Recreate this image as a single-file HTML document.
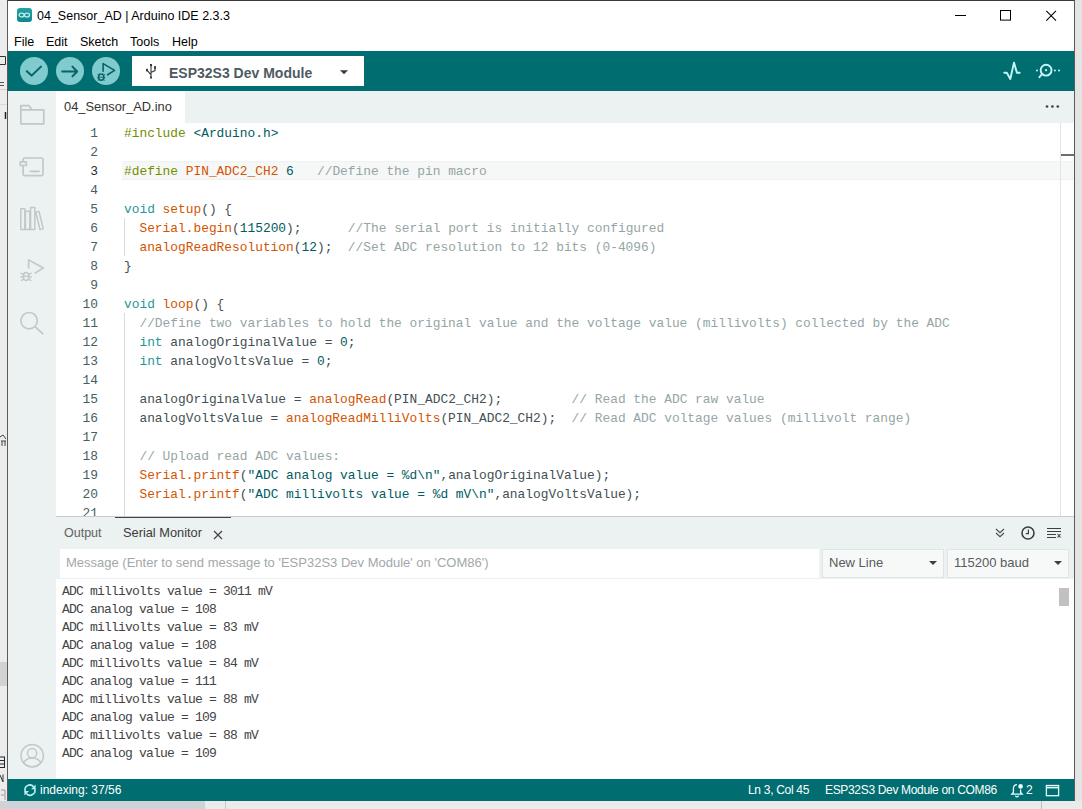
<!DOCTYPE html>
<html><head><meta charset="utf-8">
<style>
*{margin:0;padding:0;box-sizing:border-box}
html,body{width:1082px;height:809px;overflow:hidden;background:#f0f0f0;font-family:"Liberation Sans",sans-serif}
.a{position:absolute}
svg{position:absolute;overflow:visible}
#bgL{left:0;top:0;width:8px;height:809px;background:#ececec}
#bgR{left:1074px;top:0;width:8px;height:809px;background:#e4e4e4}
#bgB{left:0;top:801px;width:1082px;height:8px;background:#ebebeb}
#win{left:7px;top:0;width:1068px;height:801px;background:#fff;border:1px solid #5a5a5a;border-top:1px solid #3a3a3a}
#title{left:8px;top:1px;width:1066px;height:29px;background:#fff}
#ttext{left:37px;top:8px;font-size:12.5px;color:#000;white-space:pre}
#menu{left:8px;top:30px;width:1066px;height:21px;background:#fff;font-size:12.5px;color:#000}
#menu span{position:absolute;top:5px}
#tb{left:8px;top:51px;width:1066px;height:40px;background:#006d70}
.cb{position:absolute;width:28px;height:28px;border-radius:50%;background:#7fcbcd;top:6px}
#sel{left:124px;top:5px;width:232px;height:30px;background:#fff}
#seltext{left:37px;top:9px;font-size:14px;font-weight:bold;color:#4e5b61;white-space:pre}
#tabs{left:56px;top:91px;width:1018px;height:32px;background:#ecf1f1}
#tab{left:0;top:0;width:129px;height:32px;background:#fff}
#tabtext{left:8px;top:8px;font-size:12.85px;color:#333;white-space:pre}
#side{left:8px;top:91px;width:48px;height:688px;background:#ecf1f1}
#editor{left:56px;top:123px;width:1018px;height:393px;background:#fff;overflow:hidden}
.ln{position:absolute;left:0;width:42px;text-align:right;font-family:"Liberation Mono",monospace;font-size:12.86px;color:#44605f;height:19px;line-height:21px}
.cl{position:absolute;left:68px;font-family:"Liberation Mono",monospace;font-size:12.86px;color:#434f54;white-space:pre;height:19px;line-height:21px}
.k{color:#728e00}.t{color:#1f969a}.f{color:#d35400}.n{color:#005c5f}.c{color:#95a5a6}.s{color:#005c5f}
#panel{left:56px;top:516px;width:1018px;height:263px;background:#ecf1f1;border-top:1px solid #c8cccc}
#out{left:0;top:62px;width:1018px;height:201px;background:#fff}
.sl{position:absolute;left:6px;font-family:"Liberation Mono",monospace;font-size:13px;letter-spacing:-0.8px;color:#444;white-space:pre;height:18px;line-height:20px}
#status{left:8px;top:779px;width:1066px;height:22px;background:#006d70;color:#fff}
#status span{position:absolute;white-space:pre;top:4px}
</style></head><body>
<div class="a" id="bgL">
<div class="a" style="left:0;top:662px;width:7px;height:24px;background:#d2d2d2"></div>
<div class="a" style="left:0;top:89px;width:7px;height:1px;background:#d0d0d0"></div>
<div class="a" style="left:0;top:104px;width:7px;height:1px;background:#d8d8d8"></div>
<svg style="left:0;top:0" width="7" height="809"><g fill="none" stroke="#333" stroke-width="1">
<path d="M0 56.5H5.5V64.5H0"/>
<path d="M0 82.5H4M0 85.5H4" stroke="#555"/>
<path d="M5.5 112V119" stroke-width="1.5" stroke="#222"/>
<path d="M0 437L3 435L6 439M1 441H6M2 441V446M5 441V446" stroke="#444"/>
<path d="M0 757H5M4.5 757V768M0 760.5H5M0 764H5M0 767.5H5" stroke="#223"/>
<path d="M0 775L3 782M3 782V774.5" stroke="#333"/>
<path d="M1 790H5V800M1 795H4" stroke="#999"/>
</g></svg>
</div>
<div class="a" id="bgR"></div>
<div class="a" id="bgB"><div class="a" style="left:0;top:0;width:205px;height:9px;background:#cfd2d6"></div><div class="a" style="left:225px;top:0;width:1px;height:9px;background:#c8c8c8"></div><div class="a" style="left:1041px;top:0;width:1px;height:9px;background:#bdbdbd"></div></div>
<div class="a" id="win"></div>
<div class="a" id="title">
  <div class="a" style="left:9px;top:7px;width:15px;height:14px;border-radius:3px;background:linear-gradient(#22a3a7,#0f878c)"></div>
  <svg style="left:9px;top:7px" width="15" height="14" viewBox="0 0 15 14"><g fill="none" stroke="#c4ecee" stroke-width="1.3"><ellipse cx="4.6" cy="7" rx="2.5" ry="1.9"/><ellipse cx="10" cy="7" rx="2.5" ry="1.9"/></g></svg>
  <div class="a" id="ttext" style="left:29px">04_Sensor_AD | Arduino IDE 2.3.3</div>
  <!-- window controls -->
  <svg style="left:947px;top:14px" width="12" height="2"><rect x="0" y="0" width="11" height="1" fill="#000"/></svg>
  <svg style="left:992px;top:9px" width="12" height="12"><rect x="0.5" y="0.5" width="10" height="9.6" fill="none" stroke="#000" stroke-width="1"/></svg>
  <svg style="left:1038px;top:9px" width="12" height="12"><path d="M0.3 0.8L10 10.6M10 0.8L0.3 10.6" stroke="#000" stroke-width="1.05"/></svg>
</div>
<div class="a" id="menu">
<span style="left:6px">File</span><span style="left:38px">Edit</span><span style="left:72px">Sketch</span><span style="left:122px">Tools</span><span style="left:164px">Help</span>
</div>
<div class="a" id="tb">
<div class="cb" style="left:12px"></div>
<div class="cb" style="left:48px"></div>
<div class="cb" style="left:84px"></div>
<svg style="left:0;top:0" width="130" height="40"><g fill="none" stroke="#0b6165" stroke-width="2" stroke-linecap="round" stroke-linejoin="round">
<path d="M18.8 20.2L23.6 24.6L33 15.6"/>
<path d="M54.2 20.5H69.2M64.4 15.6L69.2 20.5L64.4 25.4"/>
<path d="M95.1 20.3V12.6L106.6 19.4L99.6 23.8" stroke-width="1.6"/>
</g>
<g fill="none" stroke="#0b6165" stroke-width="1.4">
<ellipse cx="93.2" cy="26.2" rx="2.6" ry="3.1"/>
<path d="M89.6 23.6L91 24.4M96.8 23.6L95.4 24.4M89.2 26.6H90.6M97.2 26.6H95.8M89.8 29.4L91 28.6M96.6 29.4L95.4 28.6M91.2 22.5L92 23.4M95.2 22.5L94.4 23.4" stroke-width="1.1"/>
<path d="M90.8 26.2H95.6" stroke-width="0.9"/>
</g></svg>
<svg style="left:990px;top:0" width="76" height="40"><g fill="none" stroke="#c6f7f7" stroke-width="1.9" stroke-linejoin="round" stroke-linecap="round">
<path d="M6.3 21.7H8.8L12.3 28L16 11.6L18.9 21.7H21.7"/>
<circle cx="48.1" cy="19.2" r="5.4"/>
<path d="M43.6 23.6L41.4 26.2"/>
</g>
<g fill="#c6f7f7"><circle cx="48.1" cy="19.2" r="1.1"/><circle cx="39" cy="19.5" r="1"/><circle cx="56.9" cy="19.5" r="1"/><circle cx="61" cy="19.5" r="1"/></g>
</svg>
<div class="a" id="sel"><div class="a" id="seltext">ESP32S3 Dev Module</div>
<svg style="left:0;top:0" width="232" height="30"><g fill="none" stroke="#3a3a3a" stroke-width="1.1">
<path d="M19 8.5V21.6M15 14.2L18.6 18.4M23 11.5V14.6L19.4 16.2"/></g>
<g fill="#3a3a3a"><rect x="18" y="8" width="2" height="2.2"/><rect x="14" y="12.8" width="2" height="2.6"/><rect x="22" y="10.2" width="2" height="2.6"/><rect x="18" y="20.5" width="2" height="2"/>
<path d="M208 14.3H216L212 18.2Z"/></g></svg>
</div>
</div>
<div class="a" id="side">
<svg style="left:0;top:0" width="48" height="688"><g fill="none" stroke="#c1c8c8" stroke-width="1.7" stroke-linejoin="round">
<path d="M12.8 14.6H20.8L24 18.8H35.8V32.8H12.8Z M12.8 18.8H24"/>
<rect x="15.1" y="67" width="19.9" height="17.7" rx="1.6"/>
<rect x="12.3" y="70.9" width="6" height="3.6" fill="#ecf1f1"/>
<path d="M12.8 117.8H16.8V138.6H12.8Z M17.4 120.2H21.8V138.6H17.4Z M22.6 116.6H26.8V138.6H22.6Z M27.8 121.4L31 120.4L35.2 137.6L32 138.6Z" stroke-width="1.5"/>
<path d="M20.6 177.6V168.9L35.3 177L26.6 182.4" stroke-width="1.6"/>
<circle cx="21.1" cy="229.7" r="8.2"/><path d="M27 235.6L35.2 243.2" stroke-width="1.8"/>
<circle cx="24.2" cy="664.7" r="11.2" stroke-width="1.5"/><circle cx="24.1" cy="662.2" r="4.6" stroke-width="1.5"/><path d="M15.2 672.2C17.2 668.4 20.8 667 24.2 667C27.6 667 31.2 668.4 33.2 672.2" stroke-width="1.5"/>
</g>
<rect x="21.7" y="79.5" width="10" height="1.8" fill="#c1c8c8"/>
<g fill="none" stroke="#c1c8c8" stroke-width="1.5"><ellipse cx="18.1" cy="185.5" rx="2.7" ry="3.9"/><path d="M12.6 182.2L15.6 183.4M23.6 182.2L20.6 183.4M12.4 186H15.4M23.8 186H20.8M12.8 189.6L15.6 188.4M23.4 189.6L20.6 188.4M15.4 185.2H20.8" stroke-width="1.3"/></g>
</svg></div>
<div class="a" id="tabs"><svg style="left:988px;top:14px" width="16" height="4"><g fill="#3f4548"><circle cx="3" cy="1.5" r="1.35"/><circle cx="8.4" cy="1.5" r="1.35"/><circle cx="13.8" cy="1.5" r="1.35"/></g></svg><div class="a" id="tab"><div class="a" id="tabtext">04_Sensor_AD.ino</div></div></div>
<div class="a" id="editor">
<div class="a" style="left:66px;top:38px;width:994px;height:19px;background:#f6f7f7;border-top:1px solid #f0f1f1;border-bottom:1px solid #f0f1f1"></div>
<div class="a" style="left:68px;top:95px;width:1px;height:38px;background:#d8dcdc"></div>
<div class="a" style="left:68px;top:190px;width:1px;height:210px;background:#d8dcdc"></div>
<div class="ln" style="top:0px">1</div>
<div class="cl" style="top:0px"><span class="k">#include</span> <span class="n">&lt;Arduino.h&gt;</span></div>
<div class="ln" style="top:19px">2</div>
<div class="ln" style="top:38px;color:#1e2d35">3</div>
<div class="cl" style="top:38px"><span class="k">#define</span> <span class="f">PIN_ADC2_CH2</span> <span class="n">6</span>   <span class="c">//Define the pin macro</span></div>
<div class="ln" style="top:57px">4</div>
<div class="ln" style="top:76px">5</div>
<div class="cl" style="top:76px"><span class="t">void</span> <span class="f">setup</span>() {</div>
<div class="ln" style="top:95px">6</div>
<div class="cl" style="top:95px">  <span class="f">Serial.begin</span>(<span class="n">115200</span>);      <span class="c">//The serial port is initially configured</span></div>
<div class="ln" style="top:114px">7</div>
<div class="cl" style="top:114px">  <span class="f">analogReadResolution</span>(<span class="n">12</span>);  <span class="c">//Set ADC resolution to 12 bits (0-4096)</span></div>
<div class="ln" style="top:133px">8</div>
<div class="cl" style="top:133px">}</div>
<div class="ln" style="top:152px">9</div>
<div class="ln" style="top:171px">10</div>
<div class="cl" style="top:171px"><span class="t">void</span> <span class="f">loop</span>() {</div>
<div class="ln" style="top:190px">11</div>
<div class="cl" style="top:190px">  <span class="c">//Define two variables to hold the original value and the voltage value (millivolts) collected by the ADC</span></div>
<div class="ln" style="top:209px">12</div>
<div class="cl" style="top:209px">  <span class="t">int</span> analogOriginalValue = <span class="n">0</span>;</div>
<div class="ln" style="top:228px">13</div>
<div class="cl" style="top:228px">  <span class="t">int</span> analogVoltsValue = <span class="n">0</span>;</div>
<div class="ln" style="top:247px">14</div>
<div class="ln" style="top:266px">15</div>
<div class="cl" style="top:266px">  analogOriginalValue = <span class="f">analogRead</span>(PIN_ADC2_CH2);         <span class="c">// Read the ADC raw value</span></div>
<div class="ln" style="top:285px">16</div>
<div class="cl" style="top:285px">  analogVoltsValue = <span class="f">analogReadMilliVolts</span>(PIN_ADC2_CH2);  <span class="c">// Read ADC voltage values (millivolt range)</span></div>
<div class="ln" style="top:304px">17</div>
<div class="ln" style="top:323px">18</div>
<div class="cl" style="top:323px">  <span class="c">// Upload read ADC values:</span></div>
<div class="ln" style="top:342px">19</div>
<div class="cl" style="top:342px">  <span class="f">Serial.printf</span>(<span class="s">"ADC analog value = %d\n"</span>,analogOriginalValue);</div>
<div class="ln" style="top:361px">20</div>
<div class="cl" style="top:361px">  <span class="f">Serial.printf</span>(<span class="s">"ADC millivolts value = %d mV\n"</span>,analogVoltsValue);</div>
<div class="ln" style="top:380px">21</div>
<div class="a" style="left:1004px;top:0;width:1px;height:393px;background:#e2e4e4"></div>
<div class="a" style="left:1005px;top:31px;width:13px;height:2px;background:#6e6e6e"></div>
</div>
<div class="a" id="panel">
<div class="a" style="left:59px;top:0px;width:116px;height:1px;background:#3f4548"></div>
<div class="a" style="left:8px;top:9px;font-size:12.5px;color:#616161;white-space:pre">Output</div>
<div class="a" style="left:67px;top:8px;font-size:12.8px;color:#3b3b3b;white-space:pre">Serial Monitor</div>
<svg style="left:157px;top:13px" width="10" height="10"><path d="M1 1L9 9M9 1L1 9" stroke="#444" stroke-width="1.2"/></svg>
<svg style="left:939px;top:11px" width="11" height="10"><path d="M1 1L5 4.6L9 1M1 5L5 8.6L9 5" fill="none" stroke="#4a4f52" stroke-width="1.2"/></svg>
<svg style="left:965px;top:9px" width="14" height="14"><circle cx="7" cy="7" r="6" fill="none" stroke="#3a4043" stroke-width="1.6"/><path d="M7.4 3.6V7.6H4.8" fill="none" stroke="#3a4043" stroke-width="1.2"/></svg>
<svg style="left:991px;top:10px" width="15" height="11"><path d="M0 1.5H14M0 4.5H14M0 7.5H9M0 10.5H9" stroke="#3a4043" stroke-width="1.1"/><path d="M10.5 7L13.5 10.5M13.5 7L10.5 10.5" stroke="#3a4043" stroke-width="1.1"/></svg>
<div class="a" style="left:4px;top:32px;width:759px;height:29px;background:#fff"></div>
<div class="a" style="left:10px;top:38px;font-size:13px;color:#a3a8aa;white-space:pre">Message (Enter to send message to 'ESP32S3 Dev Module' on 'COM86')</div>
<div class="a" style="left:766px;top:32px;width:122px;height:29px;background:#f7f9f9;border:1px solid #dfe5e5"></div>
<div class="a" style="left:773px;top:38px;font-size:13px;color:#555b5e;white-space:pre">New Line</div>
<svg style="left:873px;top:44px" width="8" height="5"><path d="M0 0H8L4 4Z" fill="#3a4043"/></svg>
<div class="a" style="left:891px;top:32px;width:122px;height:29px;background:#f7f9f9;border:1px solid #dfe5e5"></div>
<div class="a" style="left:898px;top:38px;font-size:13px;color:#555b5e;white-space:pre">115200 baud</div>
<svg style="left:998px;top:44px" width="8" height="5"><path d="M0 0H8L4 4Z" fill="#3a4043"/></svg>
<div class="a" id="out">
<div class="sl" style="top:3px">ADC millivolts value = 3011 mV</div>
<div class="sl" style="top:21px">ADC analog value = 108</div>
<div class="sl" style="top:39px">ADC millivolts value = 83 mV</div>
<div class="sl" style="top:57px">ADC analog value = 108</div>
<div class="sl" style="top:75px">ADC millivolts value = 84 mV</div>
<div class="sl" style="top:93px">ADC analog value = 111</div>
<div class="sl" style="top:111px">ADC millivolts value = 88 mV</div>
<div class="sl" style="top:129px">ADC analog value = 109</div>
<div class="sl" style="top:147px">ADC millivolts value = 88 mV</div>
<div class="sl" style="top:165px">ADC analog value = 109</div>
<div class="a" style="left:1003px;top:9px;width:10px;height:18px;background:#c1c1c1"></div>
</div>
</div>
<div class="a" id="status">
<svg style="left:0;top:0" width="1066" height="22"><g fill="none" stroke="#b4f2f2" stroke-width="1.6">
<path d="M17.4 12.6A4.8 4.8 0 0 1 25.6 7.8M26.6 9.6A4.8 4.8 0 0 1 18.4 14.4"/></g>
<g fill="#b4f2f2"><path d="M27.6 5.6V10.2H23Z"/><path d="M16.4 16.6V12H21Z"/></g>
<g fill="none" stroke="#e6ffff" stroke-width="1.3">
<path d="M1009 5.6C1006.4 5.6 1005.4 7.6 1005.4 10V13.4L1003.8 15.2H1014.2L1012.6 13.4V10.6M1007.4 16.6A1.7 1.7 0 0 0 1010.6 16.6"/>
<rect x="1038.4" y="6.5" width="12.2" height="10.2"/><path d="M1038.4 8.6H1050.6" stroke-width="1.6"/>
</g><circle cx="1012.6" cy="7.4" r="2.3" fill="#e6ffff"/>
</svg>
<span style="left:32px;font-size:12px">indexing: 37/56</span>
<span style="left:740px;font-size:12px;letter-spacing:-0.3px">Ln 3, Col 45</span>
<span style="left:817px;font-size:12px;letter-spacing:-0.33px">ESP32S3 Dev Module on COM86</span>
<span style="left:1018px;font-size:12px">2</span>
</div>
</body></html>
